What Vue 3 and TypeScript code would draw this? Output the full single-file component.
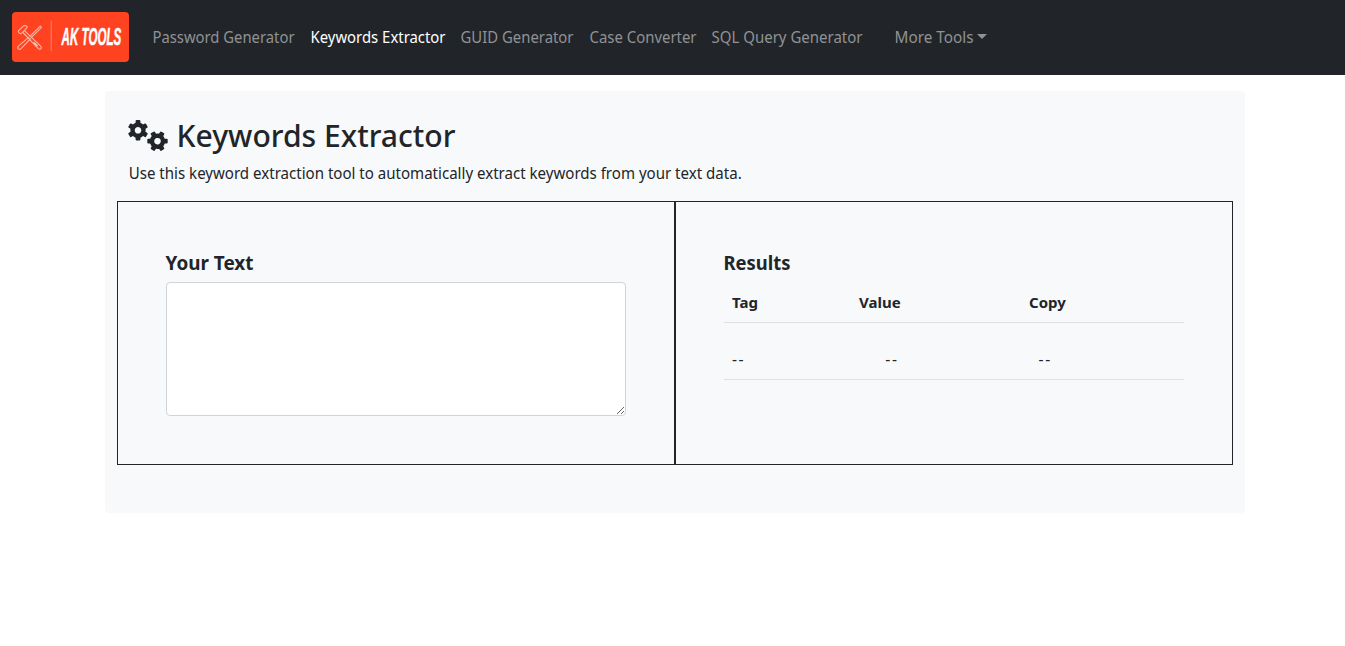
<script setup lang="ts">
interface NavItem { label: string; width: number; active?: boolean }
const navItems: NavItem[] = [
  { label: 'Password Generator', width: 142 },
  { label: 'Keywords Extractor', width: 135, active: true },
  { label: 'GUID Generator', width: 113 },
  { label: 'Case Converter', width: 107 },
  { label: 'SQL Query Generator', width: 151 },
]
const angles: number[] = [0, 60, 120, 180, 240, 300]
</script>

<template>
  <div class="page">
    <nav class="navbar">
      <a class="brand">
        <svg width="117" height="50" viewBox="0 0 117 50">
          <rect width="117" height="50" rx="4" fill="#ff4320" />
          <g fill="none" stroke="#ffb3a2" stroke-width="1.1" stroke-linejoin="round" stroke-linecap="round">
            <path d="M6.2 19.2 L11 14.3 Q13.5 12.8 15.4 14.8 L13.3 17.6 L9.3 21.4 Q7.2 22.3 6.2 19.2Z" />
            <path d="M12.4 18.7 L28.6 34.1 Q30 35.8 28.6 36.9 Q27.4 37.6 26.1 36.4 L10.9 20.5" />
            <path d="M28.2 14.1 L29.5 15.3 L19.8 25.2 M18.3 24 L28.2 14.1" />
            <path d="M17 25.2 L6.6 33.9 Q5 35.8 6.3 36.9 Q7.8 38 9.2 36.3 L18.6 26.6" />
            <path d="M22 30.6 L25.2 33.7" stroke="#ffe7e1" />
          </g>
          <path d="M39.2 8.5 V39" stroke="#ff7960" stroke-width="1.2" />
          <text class="logo-text" transform="translate(49.5 33) scale(0.61 1)" textLength="98" lengthAdjust="spacingAndGlyphs">AK TOOLS</text>
        </svg>
      </a>
      <ul class="nav-list">
        <li v-for="item in navItems" :key="item.label" class="nav-item" :class="{ active: item.active }">
          <svg class="nav-label" :width="item.width" height="24">
            <text x="-0.5" y="18" :textLength="item.width" lengthAdjust="spacingAndGlyphs">{{ item.label }}</text>
          </svg>
        </li>
        <li class="nav-item more">
          <svg class="nav-label" width="79" height="24"><text x="-0.5" y="18" textLength="79" lengthAdjust="spacingAndGlyphs">More Tools</text></svg>
          <span class="caret"></span>
        </li>
      </ul>
    </nav>

    <main class="card">
      <header class="intro">
        <h2 class="title">
          <svg class="gears" width="40" height="32" viewBox="0 0 40 32">
            <g transform="translate(10 10.3)">
              <circle r="5.5" class="ring" />
              <rect v-for="a in angles" :key="a" x="-2.4" y="-10.2" width="4.8" height="4.8" rx="1" :transform="`rotate(${a})`" />
            </g>
            <g transform="translate(29.5 21.2) rotate(30)">
              <circle r="5.5" class="ring" />
              <rect v-for="a in angles" :key="a" x="-2.4" y="-10.2" width="4.8" height="4.8" rx="1" :transform="`rotate(${a})`" />
            </g>
          </svg>
          <svg class="title-label" width="290" height="44"><text x="-0.5" y="32" textLength="279" lengthAdjust="spacingAndGlyphs">Keywords Extractor</text></svg>
        </h2>
        <svg class="lead" width="620" height="24"><text x="-0.3" y="18" textLength="613" lengthAdjust="spacingAndGlyphs">Use this keyword extraction tool to automatically extract keywords from your text data.</text></svg>
      </header>

      <div class="panels">
        <section class="panel">
          <h5><svg width="100" height="24"><text x="-0.5" y="20" textLength="88" lengthAdjust="spacingAndGlyphs">Your Text</text></svg></h5>
          <textarea></textarea>
        </section>
        <section class="panel">
          <h5><svg width="100" height="24"><text x="-0.5" y="20" textLength="67" lengthAdjust="spacingAndGlyphs">Results</text></svg></h5>
          <div class="row head">
            <span>Tag</span><span>Value</span><span>Copy</span>
          </div>
          <div class="row body">
            <span>--</span><span>--</span><span>--</span>
          </div>
        </section>
      </div>
    </main>
  </div>
</template>

<style>
html, body { background: #fff; }
</style>

<style scoped>
* { box-sizing: border-box; }
.page { min-height: 646px; font-family: "Segoe UI", "Noto Sans", sans-serif; font-size: 15.6px; color: #212529; }
svg { display: block; flex: none; overflow: visible; }
svg text { fill: currentColor; }
.navbar { height: 75px; background: #212529; display: flex; align-items: center; padding: 0 12px 1px; }
.brand { margin-right: 24px; }
.brand .logo-text { font: italic bold 24px "Liberation Sans", sans-serif; fill: #fff; stroke: #fff; stroke-width: 0.5px; }
.nav-list { display: flex; list-style: none; margin: 0; padding: 0; gap: 16px; }
.nav-item { display: flex; align-items: center; color: #909294; }
.nav-item.active { color: #fff; }
.nav-item:nth-child(n+2) { margin-left: -0.5px; }
.nav-item.more { margin-left: 16px; }
.caret { margin: -2px 0 0 3px; border: 5px solid transparent; border-top-color: currentColor; border-bottom: 0; }
.card { width: 1140px; height: 422px; margin: 16px 0 0 105px; padding: 24px 12px 0; background: #f8f9fa; border-radius: 4px; }
.intro { height: 86px; padding-left: 11.5px; }
.title { display: flex; margin: 0; height: 46px; gap: 9px; font-size: 31px; font-weight: 500; }
.gears { margin: 5px 0 0 -0.5px; fill: #212529; }
.ring { fill: none; stroke: #212529; stroke-width: 4.4; }
.panels { display: grid; grid-template-columns: minmax(0, 1fr) minmax(0, 1fr); height: 264px; }
.panel { border: 1px solid #212529; padding: 48px 48px 0; }
h5 { margin: 0 0 8px; height: 24px; font-size: 19px; font-weight: 700; }
textarea { display: block; width: 460px; height: 134px; border: 1px solid #ced4da; border-radius: 4px; background: #fff; resize: vertical; outline: none; }
.row { display: flex; border-bottom: 1px solid #dee2e6; padding-left: 8px; line-height: 24px; }
.row span { flex: none; }
.head { height: 41px; padding-top: 8px; font-size: 15px; font-weight: 700; }
.head span:nth-child(1) { width: 127px; }
.head span:nth-child(2) { width: 170px; }
.body { height: 57px; padding-top: 24px; letter-spacing: 1.6px; }
.body span:not(:last-child) { width: 153.3px; }
</style>
